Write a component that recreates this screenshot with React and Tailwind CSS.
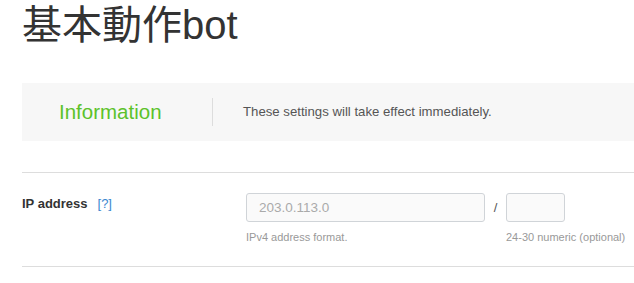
import React from "react";

const App = () => {
  return (
    <div className="w-[634px] h-[283px] overflow-hidden bg-white pl-[22px] font-['Liberation_Sans','Noto_Sans_CJK_JP',sans-serif]">
      <h1 className="text-[40px] leading-[50px] text-[#333] font-normal">
        基本動作bot
      </h1>

      <div className="mt-[33px] h-[58px] bg-[#f7f7f7] flex items-center">
        <div className="w-[190px] pl-[37px] text-[20.5px] text-[#5cc22a]">
          Information
        </div>
        <div className="w-px h-[28px] bg-[#dddddd]" />
        <div className="pl-[30px] text-[13.2px] text-[#555]">
          These settings will take effect immediately.
        </div>
      </div>

      <div className="mt-[31px] border-t border-[#dddddd] pt-[20px] h-[95px] border-b flex">
        <div className="w-[224px] pt-[2px] text-[13px] leading-[18px] text-[#333]">
          <span className="font-bold">IP address</span>
          <a className="ml-[10px] text-[#3a87cf]">[?]</a>
        </div>
        <div>
          <div className="flex items-center">
            <input
              className="w-[239px] h-[29px] rounded-[3px] border border-[#d0d4d8] bg-[#fafafa] px-[12px] text-[13.5px] text-[#999] outline-none placeholder:text-[#aaa]"
              placeholder="203.0.113.0"
            />
            <span className="w-[21px] text-center text-[13px] text-[#555]">/</span>
            <input className="w-[59px] h-[29px] rounded-[3px] border border-[#d0d4d8] bg-[#fafafa] outline-none" />
          </div>
          <div className="mt-[8px] flex text-[11px] leading-[14px] text-[#999]">
            <div className="w-[260px]">IPv4 address format.</div>
            <div>24-30 numeric (optional)</div>
          </div>
        </div>
      </div>
    </div>
  );
};

export default App;
